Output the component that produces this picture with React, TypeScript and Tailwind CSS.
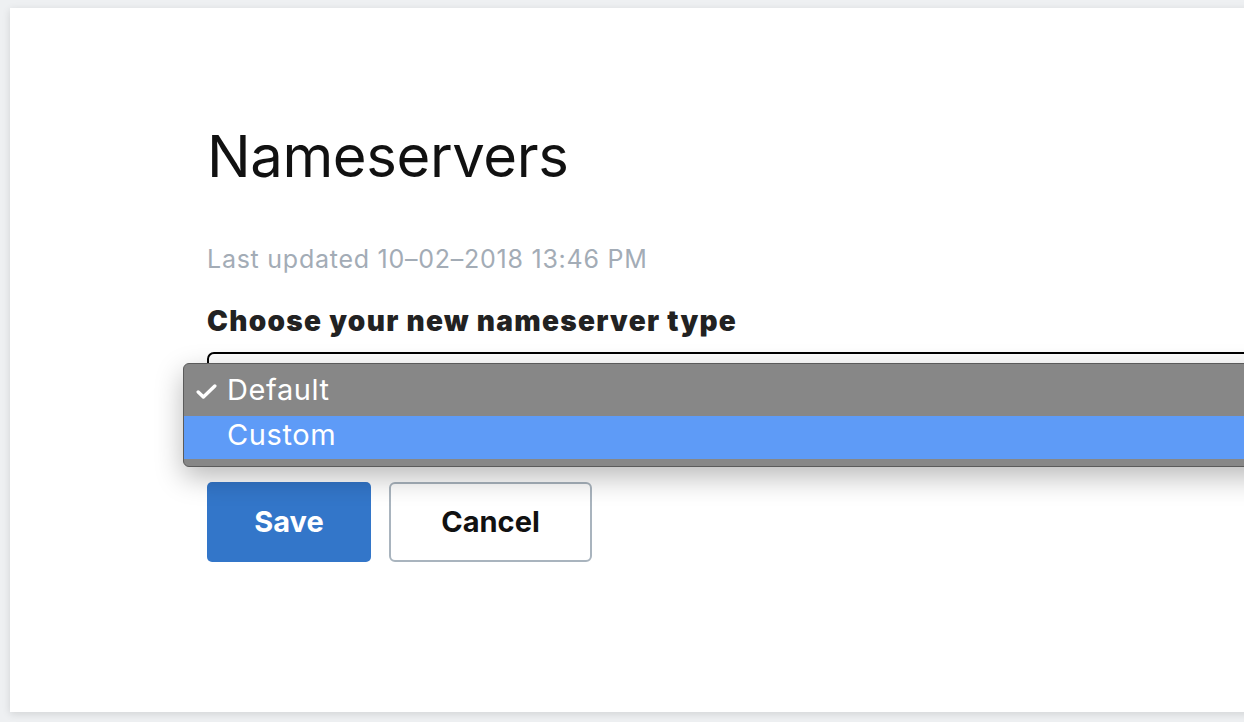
const options = [
  { label: "Default", checked: true, row: "h-[52px]" },
  { label: "Custom", checked: false, row: "h-[43px] bg-[#5e9bf7] pb-[5px]" },
];

function CheckMark() {
  return (
    <svg width="21" height="15" viewBox="0 0 21 15" fill="none">
      <path
        d="M2.2 8 7.4 13 18.8 2"
        stroke="white"
        strokeWidth="3.4"
        strokeLinecap="round"
        strokeLinejoin="round"
      />
    </svg>
  );
}

export default function App() {
  return (
    <div className="h-[722px] w-[1244px] overflow-hidden bg-[#eef0f2] pl-[10px] pt-[8px] pb-[10px] font-['Inter',sans-serif]">
      <div className="h-full w-[1300px] bg-white pl-[197px] pt-[108px] shadow-[0_2px_8px_rgba(0,0,0,0.12)]">
        <h1 className="text-[58px] leading-[80px] font-normal tracking-[-0.4px] text-[#111]">
          Nameservers
        </h1>

        <p className="mt-[47px] text-[25px] leading-[32px] tracking-[0.75px] text-[#a3acb6]">
          Last updated 10–02–2018 13:46 PM
        </p>

        <h2 className="mt-[29px] text-[28px] leading-[34px] font-black tracking-[1.3px] text-[#222]">
          Choose your new nameserver type
        </h2>

        <div className="relative mt-[14px]">
          <div className="h-[100px] w-[1100px] rounded-[7px] border-2 border-black bg-white" />

          <div className="absolute left-[-24px] top-[11px] w-[1100px] overflow-hidden rounded-[6px] border border-[#5b5b5b] bg-[#878787] pb-[7px] shadow-[0_10px_28px_rgba(0,0,0,0.28)]">
            {options.map((o) => (
              <div key={o.label} className={`flex items-center ${o.row}`}>
                <span className="flex w-[43px] justify-center pl-[1px] pt-[3px]">
                  {o.checked && <CheckMark />}
                </span>
                <span className="text-[29px] tracking-[0.6px] text-white">
                  {o.label}
                </span>
              </div>
            ))}
          </div>
        </div>

        <div className="mt-[30px] flex gap-[18px]">
          <button className="h-[80px] w-[164px] rounded-[5px] bg-[#3376c9] text-[29px] font-bold text-white">
            Save
          </button>
          <button className="h-[80px] w-[203px] rounded-[6px] border-2 border-[#a9b4be] bg-white text-[29px] font-bold text-[#111]">
            Cancel
          </button>
        </div>
      </div>
    </div>
  );
}
